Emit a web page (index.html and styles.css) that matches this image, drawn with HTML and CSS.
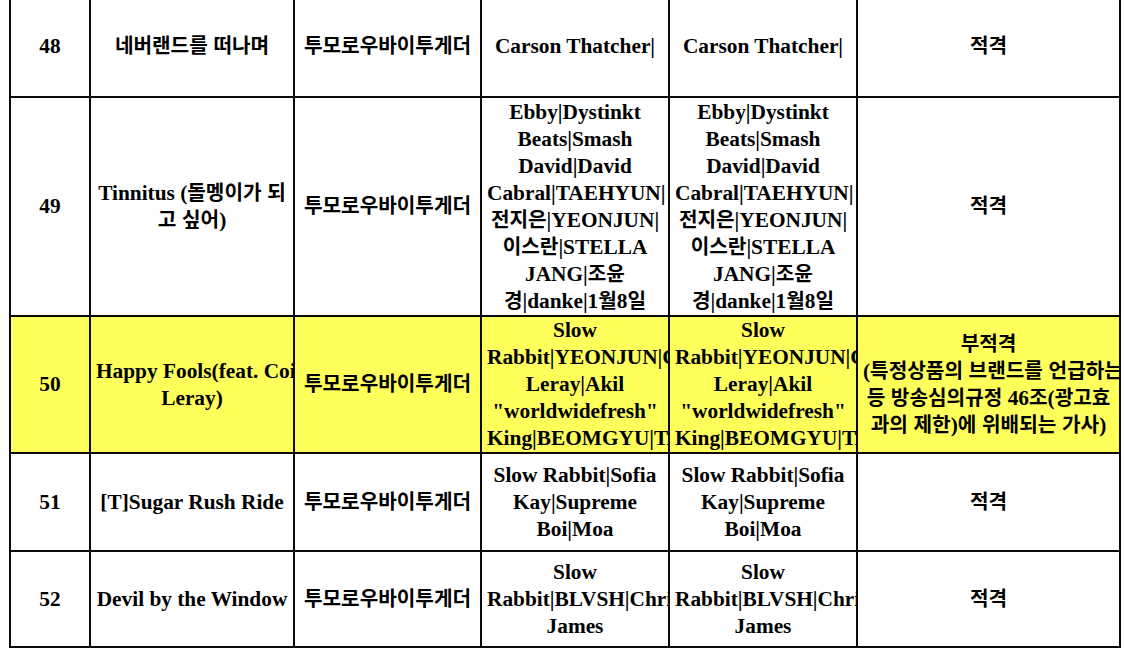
FILE: index.html
```html
<!DOCTYPE html>
<html lang="ko">
<head>
<meta charset="utf-8">
<title>심의 결과</title>
<link rel="stylesheet" href="styles.css">
</head>
<body>
<table class="review">
  <colgroup>
    <col class="col-no">
    <col class="col-title">
    <col class="col-artist">
    <col class="col-credit-a">
    <col class="col-credit-b">
    <col class="col-result">
  </colgroup>
  <tbody>
    <tr class="row-48">
      <td>48</td>
      <td><span class="ko">네버랜드를 떠나며</span></td>
      <td><span class="ko">투모로우바이투게더</span></td>
      <td>Carson Thatcher|</td>
      <td>Carson Thatcher|</td>
      <td><span class="ko">적격</span></td>
    </tr>
    <tr class="row-49">
      <td>49</td>
      <td>Tinnitus (<span class="ko">돌멩이가 되</span><br><span class="ko">고 싶어</span>)</td>
      <td><span class="ko">투모로우바이투게더</span></td>
      <td>Ebby|Dystinkt<br>Beats|Smash<br>David|David<br>Cabral|TAEHYUN|<br><span class="ko">전지은</span>|YEONJUN|<br><span class="ko">이스란</span>|STELLA<br>JANG|<span class="ko">조윤</span><br><span class="ko">경</span>|danke|1<span class="ko">월</span>8<span class="ko">일</span></td>
      <td>Ebby|Dystinkt<br>Beats|Smash<br>David|David<br>Cabral|TAEHYUN|<br><span class="ko">전지은</span>|YEONJUN|<br><span class="ko">이스란</span>|STELLA<br>JANG|<span class="ko">조윤</span><br><span class="ko">경</span>|danke|1<span class="ko">월</span>8<span class="ko">일</span></td>
      <td><span class="ko">적격</span></td>
    </tr>
    <tr class="row-50 flagged">
      <td>50</td>
      <td>Happy Fools(feat. Coi<br>Leray)</td>
      <td><span class="ko">투모로우바이투게더</span></td>
      <td>Slow<br>Rabbit|YEONJUN|Coi<br>Leray|Akil<br>"worldwidefresh"<br>King|BEOMGYU|TAEHYUN</td>
      <td>Slow<br>Rabbit|YEONJUN|Coi<br>Leray|Akil<br>"worldwidefresh"<br>King|BEOMGYU|TAEHYUN</td>
      <td><span class="ko">부적격</span><br>(<span class="ko">특정상품의 브랜드를 언급하는</span><br><span class="ko">등 방송심의규정</span> 46<span class="ko">조</span>(<span class="ko">광고효</span><br><span class="ko">과의 제한</span>)<span class="ko">에 위배되는 가사</span>)</td>
    </tr>
    <tr class="row-51">
      <td>51</td>
      <td>[T]Sugar Rush Ride</td>
      <td><span class="ko">투모로우바이투게더</span></td>
      <td>Slow Rabbit|Sofia<br>Kay|Supreme<br>Boi|Moa</td>
      <td>Slow Rabbit|Sofia<br>Kay|Supreme<br>Boi|Moa</td>
      <td><span class="ko">적격</span></td>
    </tr>
    <tr class="row-52">
      <td>52</td>
      <td>Devil by the Window</td>
      <td><span class="ko">투모로우바이투게더</span></td>
      <td>Slow<br>Rabbit|BLVSH|Chris<br>James</td>
      <td>Slow<br>Rabbit|BLVSH|Chris<br>James</td>
      <td><span class="ko">적격</span></td>
    </tr>
  </tbody>
</table>
</body>
</html>
```
FILE: styles.css
```css
html,
body {
  margin: 0;
  padding: 0;
  background: #ffffff;
}

body {
  font-family: "Liberation Serif", "Noto Sans CJK KR", serif;
  color: #000000;
}

.review {
  border-collapse: collapse;
  table-layout: fixed;
  width: 1110px;
  margin: -6px 0 0 9px;
  font-size: 21.33px;
  font-weight: 700;
  line-height: 27px;
}

.review td {
  border: 2px solid #0a0a0a;
  padding: 0 5px;
  text-align: center;
  vertical-align: middle;
  white-space: nowrap;
  overflow: hidden;
}

.ko {
  font-family: "Noto Sans CJK KR", sans-serif;
  font-size: 20.2px;
  font-weight: 700;
  line-height: 18px;
}

.col-no { width: 80px; }
.col-title { width: 204px; }
.col-artist { width: 187px; }
.col-credit-a { width: 188px; }
.col-credit-b { width: 188px; }
.col-result { width: 263px; }

.row-48 { height: 102px; }
.row-49 { height: 219px; }
.row-50 { height: 137px; }
.row-51 { height: 98px; }
.row-52 { height: 96px; }

.flagged td {
  background: #ffff5c;
}
```
